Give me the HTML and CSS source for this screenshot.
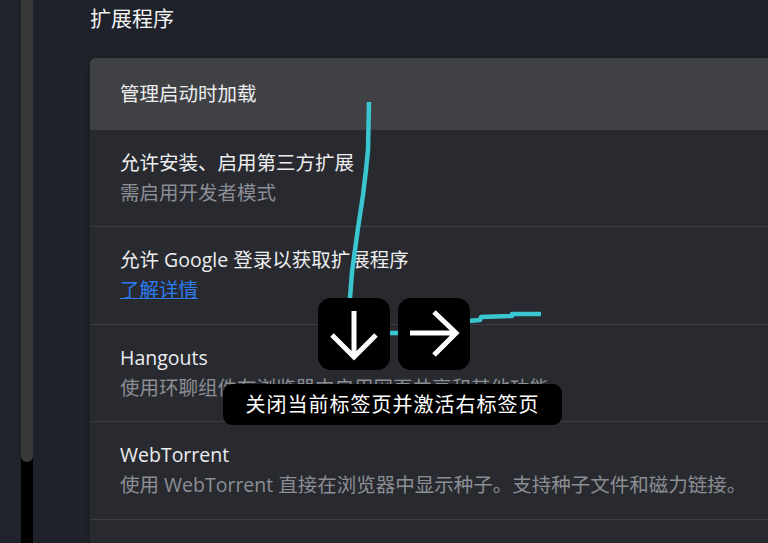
FILE: index.html
```html
<!DOCTYPE html>
<html lang="zh-CN">
<head>
<meta charset="utf-8">
<title>扩展程序</title>
<link rel="stylesheet" href="styles.css">
</head>
<body>
<div class="page">
  <div class="rail"></div>
  <div class="scrollbar"><div class="thumb"></div></div>
  <main class="main">
    <h2 class="heading">扩展程序</h2>
    <section class="card">
      <div class="row row-single row-hover">
        <div class="title">管理启动时加载</div>
      </div>
      <div class="row">
        <div class="title">允许安装、启用第三方扩展</div>
        <div class="desc">需启用开发者模式</div>
      </div>
      <div class="row">
        <div class="title">允许 Google 登录以获取扩展程序</div>
        <a class="link" href="#">了解详情</a>
      </div>
      <div class="row">
        <div class="title">Hangouts</div>
        <div class="desc">使用环聊组件在浏览器中启用网页共享和其他功能</div>
      </div>
      <div class="row">
        <div class="title">WebTorrent</div>
        <div class="desc">使用 WebTorrent 直接在浏览器中显示种子。支持种子文件和磁力链接。</div>
      </div>
      <div class="row row-single"></div>
    </section>
  </main>

  <svg class="trail" width="768" height="543" viewBox="0 0 768 543">
    <polyline points="369,102 368,150 366,170 363,195 358,228 355,250 352,272 350,298 352,333 400,333 468,321 480,320 481,317 512,316 512,314 541,314"
      fill="none" stroke="#39c6d1" stroke-width="4.5" stroke-linejoin="round"/>
  </svg>
  <div class="gesture gesture-down">
    <svg width="72" height="72" viewBox="0 0 72 72">
      <path d="M36 13 V58 M14 37 L36 59 L58 37" fill="none" stroke="#fff" stroke-width="5" stroke-linecap="butt" stroke-linejoin="miter"/>
    </svg>
  </div>
  <div class="gesture gesture-right">
    <svg width="72" height="72" viewBox="0 0 72 72">
      <path d="M12 35 H58 M36 14 L58 35 L36 57" fill="none" stroke="#fff" stroke-width="5" stroke-linecap="butt" stroke-linejoin="miter"/>
    </svg>
  </div>
  <div class="tip">关闭当前标签页并激活右标签页</div>
</div>
</body>
</html>
```
FILE: styles.css
```css
html, body {
  margin: 0;
  padding: 0;
  background: #1f222a;
  overflow: hidden;
}
body {
  font-family: "Open Sans", "Noto Sans CJK SC", sans-serif;
  color: #e9eaec;
}
.page {
  position: relative;
  display: flex;
  width: 768px;
  height: 543px;
  overflow: hidden;
}
.rail {
  width: 21px;
  flex: none;
  background: #20232b;
}
.scrollbar {
  width: 12px;
  flex: none;
  background: #000;
}
.thumb {
  height: 462px;
  background: #383838;
  border-radius: 0 0 6px 6px;
}
.main {
  flex: 1;
  padding-left: 57px;
  min-width: 0;
}
.heading {
  margin: 0;
  font-size: 21px;
  font-weight: normal;
  line-height: 36px;
  color: #f2f2f2;
}
.card {
  margin-top: 22px;
  margin-right: -40px;
  background: #292a2f;
  border-radius: 6px 6px 0 0;
  box-shadow: -3px 0 6px rgba(0, 0, 0, 0.12);
}
.row {
  padding: 18px 30px 18.4px 30px;
  border-bottom: 1px solid #3c3d42;
  font-size: 19.5px;
  line-height: 30px;
}
.row-single {
  padding: 21px 30px;
  min-height: 30px;
  border-bottom: none;
}
.row-hover {
  background: #404144;
  border-radius: 6px 6px 0 0;
}
.title {
  color: #eceef0;
}
.desc {
  color: #8b8e94;
  white-space: nowrap;
}
.link {
  color: #2c7bf0;
  text-decoration: underline;
}
.trail {
  position: absolute;
  left: 0;
  top: 0;
  pointer-events: none;
}
.gesture {
  position: absolute;
  top: 298px;
  width: 72px;
  height: 72px;
  background: #000;
  border-radius: 13px;
}
.gesture svg {
  display: block;
}
.gesture-down {
  left: 318px;
}
.gesture-right {
  left: 398px;
}
.tip {
  position: absolute;
  left: 223px;
  top: 384px;
  width: 339px;
  height: 41px;
  background: #000;
  border-radius: 9px;
  color: #fff;
  font-size: 20px;
  letter-spacing: 1px;
  line-height: 41px;
  text-align: center;
}
```
